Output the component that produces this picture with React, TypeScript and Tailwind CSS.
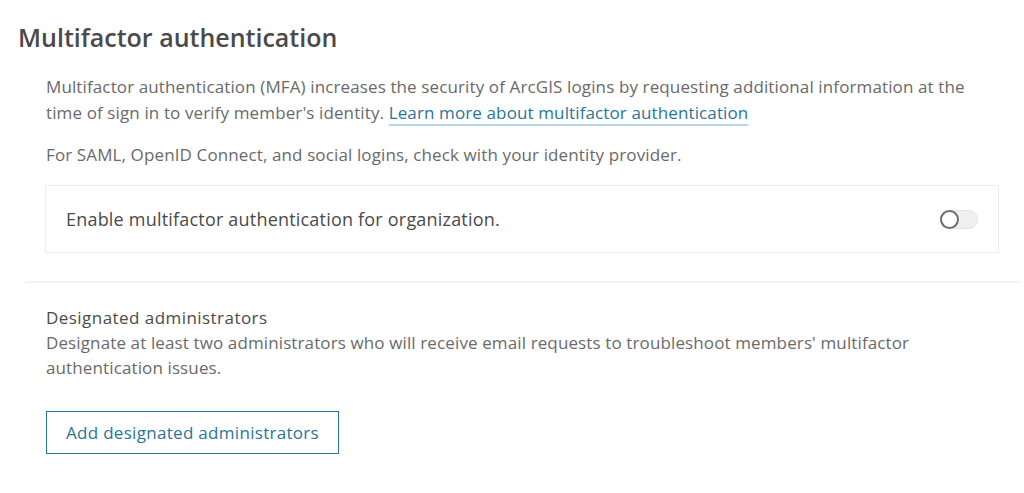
export default function App() {
  return (
    <div className="min-h-screen bg-white font-['Open_Sans',sans-serif] text-[#6a6a6a]">
      <div className="pl-[18px] pt-[22px]">
        <h1 className="text-[25px] leading-[30px] font-semibold text-[#4a4a4a]">Multifactor authentication</h1>
      </div>

      <div className="pl-[46px] pr-[25px] pt-[22px]">
        <p className="text-[17px] leading-[26px] tracking-[0.12px]">
          Multifactor authentication (MFA) increases the security of ArcGIS logins by requesting additional information at the time of sign in to verify member's identity.{' '}
          <a
            href="#"
            className="text-[#2b7598] underline decoration-2 decoration-[#b9d7e6] underline-offset-[5px]"
          >
            Learn more about multifactor authentication
          </a>
        </p>
        <p className="mt-[16px] text-[17px] leading-[26px] tracking-[0.12px]">
          For SAML, OpenID Connect, and social logins, check with your identity provider.
        </p>
      </div>

      <div className="ml-[45px] mr-[25px] mt-[17px] h-[68px] border border-[#ececec] flex items-center justify-between pl-[20px] pr-[20px]">
        <span className="text-[18px] tracking-[0.2px] text-[#4a4a4a]">Enable multifactor authentication for organization.</span>
        <button
          type="button"
          aria-label="Enable multifactor authentication"
          className="relative w-[38px] h-[19px] rounded-full bg-[#f0f0f0] border border-[#e2e2e2]"
        >
          <span className="absolute -left-[1px] -top-[1px] w-[19px] h-[19px] rounded-full bg-white border-2 border-[#6e6e6e]" />
        </button>
      </div>

      <div className="ml-[25px] mr-[5px] mt-[28px] h-[2px] bg-[#f3f3f3]" />

      <div className="pl-[46px] pr-[25px] pt-[22px]">
        <h2 className="text-[17px] leading-[25px] font-medium tracking-[0.45px] text-[#4a4a4a]">Designated administrators</h2>
        <p className="text-[17px] leading-[25px] tracking-[0.12px] max-w-[900px]">
          Designate at least two administrators who will receive email requests to troubleshoot members' multifactor authentication issues.
        </p>
        <button
          type="button"
          className="mt-[31px] h-[43px] px-[19px] border border-[#2b7598] text-[#2b7598] text-[17px] tracking-[0.3px]"
        >
          Add designated administrators
        </button>
      </div>
    </div>
  );
}
